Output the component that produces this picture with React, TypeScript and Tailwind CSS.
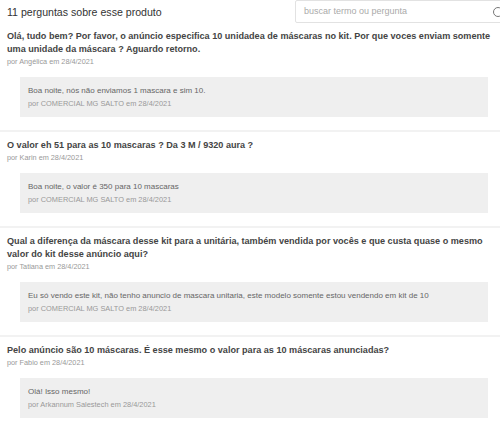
const questions = [
  {
    text: "Olá, tudo bem? Por favor, o anúncio especifica 10 unidadea de máscaras no kit. Por que voces enviam somente uma unidade da máscara ? Aguardo retorno.",
    author: "Angélica",
    reply: "Boa noite, nós não enviamos 1 mascara e sim 10.",
    seller: "COMERCIAL MG SALTO",
  },
  {
    text: "O valor eh 51 para as 10 mascaras ? Da 3 M / 9320 aura ?",
    author: "Karin",
    reply: "Boa noite, o valor é 350 para 10 mascaras",
    seller: "COMERCIAL MG SALTO",
  },
  {
    text: "Qual a diferença da máscara desse kit para a unitária, também vendida por vocês e que custa quase o mesmo valor do kit desse anúncio aqui?",
    author: "Tatiana",
    reply: "Eu só vendo este kit, não tenho anuncio de mascara unitaria, este modelo somente estou vendendo em kit de 10",
    seller: "COMERCIAL MG SALTO",
  },
  {
    text: "Pelo anúncio são 10 máscaras. É esse mesmo o valor para as 10 máscaras anunciadas?",
    author: "Fabio",
    reply: "Olá! Isso mesmo!",
    seller: "Arkannum Salestech",
  },
];

export default function App() {
  return (
    <div className="w-[500px] h-[430px] overflow-hidden bg-white font-['Liberation_Sans',Arial,sans-serif]">
      {/* Cabeçalho */}
      <div className="flex items-start justify-between h-[23px]">
        <h2 className="pl-[7px] pt-[4px] text-[10.6px] leading-[16px] text-[#333]">
          11 perguntas sobre esse produto
        </h2>
        <div className="flex items-center shrink-0 w-[215px] h-[23px] -mr-[10px] border border-[#e2e2e2] rounded-[2px] pl-[8px] pr-[6px]">
          <span className="flex-1 text-[9px] text-[#aaa]">buscar termo ou pergunta</span>
          <span className="w-[10px] h-[10px] rounded-full border border-[#777]"></span>
        </div>
      </div>
      {/* Lista */}
      <div>
        {questions.map((q, i) => (
          <div
            key={i}
            className={i < questions.length - 1 ? "pt-[7px] pb-[13px] border-b-2 border-[#f2f2f2]" : "pt-[7px]"}
          >
            <p className="pl-[7px] pr-[8px] text-[9.1px] leading-[13px] font-bold text-[#444]">{q.text}</p>
            <p className="px-[7px] text-[7.3px] leading-[12px] text-[#999]">por {q.author} em 28/4/2021</p>
            <div className="ml-[20px] w-[468px] mt-[9px] bg-[#efefef] px-[8px] pt-[7px] pb-[7px]">
              <p className="text-[8px] leading-[13px] text-[#666]">{q.reply}</p>
              <p className="mt-[1px] text-[7.4px] leading-[12px] text-[#999]">por {q.seller} em 28/4/2021</p>
            </div>
          </div>
        ))}
      </div>
    </div>
  );
}
